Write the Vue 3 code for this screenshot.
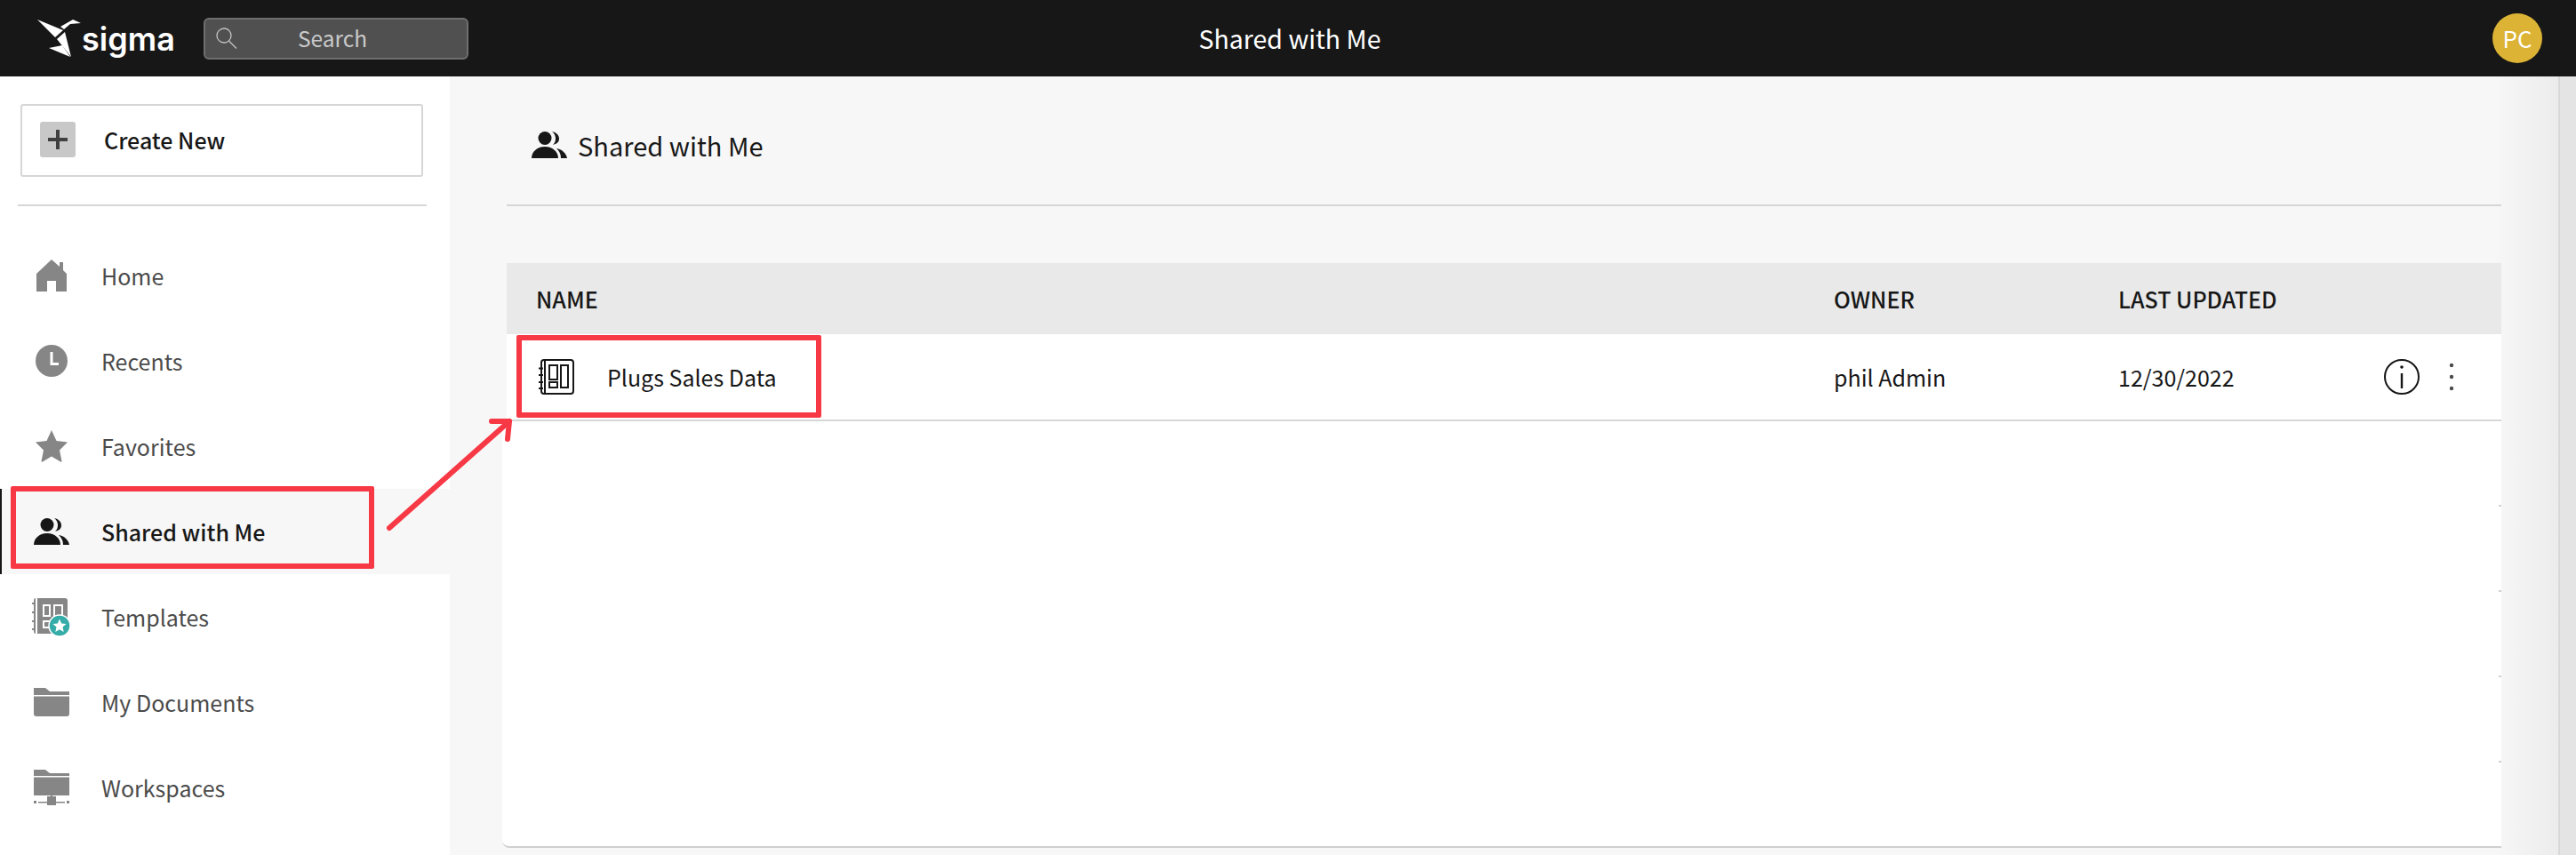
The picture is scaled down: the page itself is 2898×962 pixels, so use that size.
<script setup>
const navItems = [
  { name: 'Home', icon: 'home' },
  { name: 'Recents', icon: 'clock' },
  { name: 'Favorites', icon: 'star' },
  { name: 'Shared with Me', icon: 'people', active: true },
  { name: 'Templates', icon: 'templates' },
  { name: 'My Documents', icon: 'folder' },
  { name: 'Workspaces', icon: 'workspace' }
]
</script>

<template>
  <div class="app">
    <header class="topbar">
      <div class="topbar-left">
        <div class="brand">
          <svg class="bird" width="50" height="44" viewBox="0 0 50 44">
            <path fill="#fff" d="M0 1 L29 13 L20 21 Z" />
            <path fill="#fff" d="M26 9 L40 1 L49 5 L37 6 L30 12 Z" />
            <path fill="#fff" d="M31 15 L38 43 L22 23 Z" />
            <path fill="#fff" d="M13 33 L28 30 L37 43 Z" />
          </svg>
          <span class="brand-name">sigma</span>
        </div>
        <div class="search">
          <svg width="24" height="24" viewBox="0 0 24 24" fill="none" stroke="#c4c4c4" stroke-width="1.3">
            <circle cx="9" cy="9" r="8" />
            <path d="M14.5 15 L23 23.5" />
          </svg>
          <span>Search</span>
        </div>
      </div>
      <div class="topbar-title">Shared with Me</div>
      <div class="avatar">PC</div>
    </header>

    <div class="body">
      <aside class="sidebar">
        <div class="create-wrap">
          <button class="create">
            <span class="plus">
              <svg width="22" height="22" viewBox="0 0 22 22" fill="#3f3f3f">
                <rect x="0" y="9" width="22" height="4" />
                <rect x="9" y="0" width="4" height="22" />
              </svg>
            </span>
            Create New
          </button>
        </div>
        <nav class="nav">
          <div v-for="item in navItems" :key="item.name" class="nav-item" :class="{ active: item.active }">
            <span class="nav-icon">
              <svg v-if="item.icon === 'home'" width="36" height="36" viewBox="0 0 36 36" fill="#868686">
                <path d="M18 0 L27 8 V3 H31 V12 L35 16 V36 H23 V24 H13 V36 H1 V16 Z" />
              </svg>
              <svg v-else-if="item.icon === 'clock'" width="36" height="36" viewBox="0 0 36 36">
                <circle cx="18" cy="18" r="18" fill="#868686" />
                <path d="M18 8 V21.5 H26" fill="none" stroke="#fff" stroke-width="3" />
              </svg>
              <svg v-else-if="item.icon === 'star'" width="36" height="36" viewBox="0 0 36 36" fill="#868686">
                <path d="M18 0 L23.5 12 L36 13.5 L27 22.5 L29.5 35 Q29.5 36 28 35.5 L18 29.5 L8 35.5 Q6.5 36 6.5 35 L9 22.5 L0 13.5 L12.5 12 Z" />
              </svg>
              <svg v-else-if="item.icon === 'people'" width="40" height="30" viewBox="0 0 40 30" fill="#171717">
                <circle cx="15" cy="7.5" r="7.5" />
                <path d="M23 0 C28 1 31 4 31 8 C31 12 28 14 24 15 C26 13 27 11 27 8 C27 5 26 2 23 0 Z" />
                <path d="M0 30 C0 23 6 17 15 17 C24 17 30 23 30 30 Z" />
                <path d="M28 19 C34 20 39 24 40 30 H33 C33 25 31 22 28 19 Z" />
              </svg>
              <svg v-else-if="item.icon === 'templates'" width="43" height="43" viewBox="0 0 43 43">
                <path fill="#868686" d="M6 0 H37 Q40 0 40 3 V40 H6 Z" />
                <path fill="#868686" d="M2 3 Q2 0 4 0 V40 Q2 40 2 37 Z" />
                <path fill="#868686" d="M0 5 H2 V7 H0 Z M0 15 H2 V17 H0 Z M0 25 H2 V27 H0 Z M0 34 H2 V36 H0 Z" />
                <path fill="none" stroke="#fff" stroke-width="2" d="M13 8 H20 V20 H13 Z M25 8 H34 V24 H25 Z M13 26 H20 V33 H13 Z" />
                <circle cx="31" cy="31" r="12" fill="#35aca8" stroke="#fff" stroke-width="1.5" />
                <path fill="#fff" d="M31 23.5 L33.2 28.5 L38.5 29 L34.5 32.6 L35.7 38 L31 35.2 L26.3 38 L27.5 32.6 L23.5 29 L28.8 28.5 Z" />
              </svg>
              <svg v-else-if="item.icon === 'folder'" width="40" height="32" viewBox="0 0 40 32" fill="#868686">
                <path d="M0 0 H13 L18 4 H40 V8 H0 Z" />
                <path d="M0 9.5 H40 V29 Q40 32 37 32 H3 Q0 32 0 29 Z" />
              </svg>
              <svg v-else width="40" height="40" viewBox="0 0 40 40" fill="#868686">
                <path d="M0 0 H13 L18 4 H40 V7 H0 Z" />
                <path d="M0 8.5 H40 V29 H0 Z" />
                <rect x="15" y="30" width="10" height="10" />
                <rect x="19" y="28" width="2" height="4" />
                <path d="M0 35 H3 V38 H0 Z M5 36 H15 V37.5 H5 Z M25 36 H35 V37.5 H25 Z M37 35 H40 V38 H37 Z" />
              </svg>
            </span>
            <span class="nav-label">{{ item.name }}</span>
          </div>
        </nav>
      </aside>

      <main class="main">
        <div class="page-head">
          <svg width="40" height="30" viewBox="0 0 40 30" fill="#171717">
            <circle cx="15" cy="7.5" r="7.5" />
            <path d="M23 0 C28 1 31 4 31 8 C31 12 28 14 24 15 C26 13 27 11 27 8 C27 5 26 2 23 0 Z" />
            <path d="M0 30 C0 23 6 17 15 17 C24 17 30 23 30 30 Z" />
            <path d="M28 19 C34 20 39 24 40 30 H33 C33 25 31 22 28 19 Z" />
          </svg>
          <span>Shared with Me</span>
        </div>

        <section class="table">
          <div class="table-head">
            <span class="col-name">NAME</span>
            <span class="col-owner">OWNER</span>
            <span class="col-date">LAST UPDATED</span>
          </div>
          <div class="table-body">
            <div class="table-row">
              <span class="col-name doc-name">
                <svg width="40" height="40" viewBox="0 0 40 40" fill="none" stroke="#171717" stroke-width="2">
                  <path d="M6 1 H36 Q39 1 39 4 V36 Q39 39 36 39 H6 Q3 39 3 36 V4 Q3 1 6 1 Z" />
                  <path d="M7 1 V39" />
                  <path d="M0 10.5 H5 M0 18 H5 M0 26 H5 M0 33 H5" />
                  <path d="M12 7 H21 V23 H12 Z M25 7 H33 V32 H25 Z M12 26 H21 V32 H12 Z" />
                </svg>
                <span>Plugs Sales Data</span>
              </span>
              <span class="col-owner">phil Admin</span>
              <span class="col-date">12/30/2022</span>
              <span class="row-actions">
                <svg width="40" height="40" viewBox="0 0 40 40" fill="none" stroke="#171717" stroke-width="2">
                  <circle cx="20" cy="20" r="19" />
                  <path d="M20 16 V33" stroke-width="2.4" />
                  <circle cx="20" cy="9" r="1.8" fill="#171717" stroke="none" />
                </svg>
                <svg width="8" height="32" viewBox="0 0 8 32" fill="#4a4a4a">
                  <circle cx="4" cy="3" r="2.2" />
                  <circle cx="4" cy="16" r="2.2" />
                  <circle cx="4" cy="29" r="2.2" />
                </svg>
              </span>
            </div>
            <i v-for="n in 4" :key="n" class="tick"></i>
          </div>
        </section>
      </main>
      <div class="scrollbar"></div>
    </div>

    <!-- annotations on top of the screenshot -->
    <div class="mark mark-nav"></div>
    <div class="mark mark-row"></div>
    <svg class="arrow" width="160" height="150" viewBox="0 0 160 150" fill="none" stroke="#f73845" stroke-width="6" stroke-linecap="round" stroke-linejoin="round">
      <path d="M4 142 L139 22" />
      <path d="M119 22 L139 22 L137 42" />
    </svg>
  </div>
</template>

<style>
html, body {
  margin: 0;
  background: #fff;
}
</style>

<style scoped>
.app {
  position: relative;
  width: 2898px;
  height: 962px;
  overflow: hidden;
  font-family: "Noto Sans CJK SC", "Noto Sans", sans-serif;
  color: #171717;
}

.topbar {
  height: 86px;
  background: #171717;
  display: grid;
  grid-template-columns: 1fr auto 1fr;
  align-items: center;
  padding: 0 38px 0 42px;
}

.topbar-left {
  display: flex;
  align-items: center;
}

.brand {
  display: flex;
  align-items: center;
  width: 187px;
}

.bird {
  margin-top: -1px;
}

.brand-name {
  font-family: Inter, sans-serif;
  font-weight: 600;
  font-size: 36px;
  line-height: 44px;
  color: #fff;
  margin-left: 0;
  margin-top: 1px;
}

.search {
  box-sizing: border-box;
  width: 298px;
  height: 47px;
  display: flex;
  align-items: center;
  padding-left: 12px;
  background: #505050;
  border: 2px solid #6f6f6f;
  border-radius: 6px;
  color: #c9c9c9;
  font-size: 24.5px;
  line-height: 32px;
}

.search svg {
  margin-right: 68px;
}

.topbar-title {
  color: #fff;
  font-size: 28.5px;
  line-height: 36px;
}

.avatar {
  justify-self: end;
  width: 56px;
  height: 56px;
  border-radius: 50%;
  background: #dcb334;
  color: #fff;
  font-size: 26px;
  line-height: 56px;
  text-align: center;
}

.body {
  display: flex;
  height: 876px;
}

.sidebar {
  width: 506px;
  flex-shrink: 0;
  background: #fff;
}

.create-wrap {
  margin: 0 26px 0 20px;
  padding: 31px 4px 32px 3px;
  height: 146px;
  box-sizing: border-box;
  border-bottom: 2px solid #d6d6d6;
}

.create {
  box-sizing: border-box;
  width: 453px;
  height: 82px;
  display: flex;
  align-items: center;
  gap: 32px;
  padding: 0 20px 2px;
  background: #fff;
  border: 2px solid #d6d6d6;
  border-radius: 3px;
  font-family: inherit;
  font-weight: 500;
  font-size: 25px;
  line-height: 32px;
  color: #171717;
}

.plus {
  width: 40px;
  height: 40px;
  background: #c8c8c8;
  border-radius: 3px;
  display: flex;
  align-items: center;
  justify-content: center;
}

.nav {
  padding-top: 30px;
}

.nav-item {
  height: 96px;
  display: flex;
  align-items: center;
  padding-left: 34px;
  border-left: 2px solid transparent;
  color: #4b4b4b;
  font-size: 25px;
  line-height: 32px;
}

.nav-item.active {
  background: #f7f7f7;
  border-left-color: #171717;
  color: #171717;
  font-weight: 500;
}

.nav-icon {
  width: 43px;
  display: flex;
  justify-content: center;
  margin-right: 35px;
}

.main {
  flex: 1;
  background: #f7f7f7;
  background-image: linear-gradient(to right, transparent 2300px, #ececec 100%);
  padding: 0 64px 0 59px;
}

.page-head {
  box-sizing: border-box;
  height: 146px;
  margin-left: 5px;
  padding: 9px 0 0 28px;
  display: flex;
  align-items: center;
  gap: 12px;
  border-bottom: 2px solid #d6d6d6;
  font-size: 29px;
  line-height: 38px;
}

.table {
  margin-top: 64px;
  height: 658px;
  display: flex;
  flex-direction: column;
}

.table-head,
.table-row {
  display: flex;
  align-items: center;
}

.table-head {
  height: 80px;
  margin-left: 5px;
  background: #e9e9e9;
  font-weight: 500;
  font-size: 25px;
  line-height: 32px;
}

.table-body {
  position: relative;
  flex: 1;
  background: #fff;
  border-bottom: 2px solid #d0d0d0;
  border-radius: 0 0 0 8px;
}

.table-row {
  box-sizing: border-box;
  height: 98px;
  margin-left: 5px;
  border-bottom: 2px solid #d6d6d6;
  box-shadow: -5px 0 0 #f7f7f7;
  font-size: 25px;
  line-height: 32px;
}

.col-name {
  width: 1493px;
  padding-left: 33px;
  box-sizing: border-box;
}

.col-owner {
  width: 320px;
}

.col-date {
  width: 299px;
}

.doc-name {
  display: flex;
  align-items: center;
  gap: 37px;
  padding-left: 36px;
}

.row-actions {
  display: flex;
  align-items: center;
  gap: 32px;
}

.tick {
  position: absolute;
  right: 0;
  width: 3px;
  height: 2px;
  background: #d0d0d0;
}

.tick:nth-of-type(1) { top: 192px; }
.tick:nth-of-type(2) { top: 288px; }
.tick:nth-of-type(3) { top: 384px; }
.tick:nth-of-type(4) { top: 480px; }

.scrollbar {
  box-sizing: border-box;
  width: 20px;
  flex-shrink: 0;
  background: #e4e4e4;
  border-left: 2px solid #d8d8d8;
}

.mark {
  position: absolute;
  box-sizing: border-box;
  border: 6px solid #f73845;
  border-radius: 2px;
}

.mark-nav {
  left: 12px;
  top: 547px;
  width: 409px;
  height: 93px;
}

.mark-row {
  left: 581px;
  top: 377px;
  width: 343px;
  height: 93px;
}

.arrow {
  position: absolute;
  left: 434px;
  top: 452px;
}
</style>
